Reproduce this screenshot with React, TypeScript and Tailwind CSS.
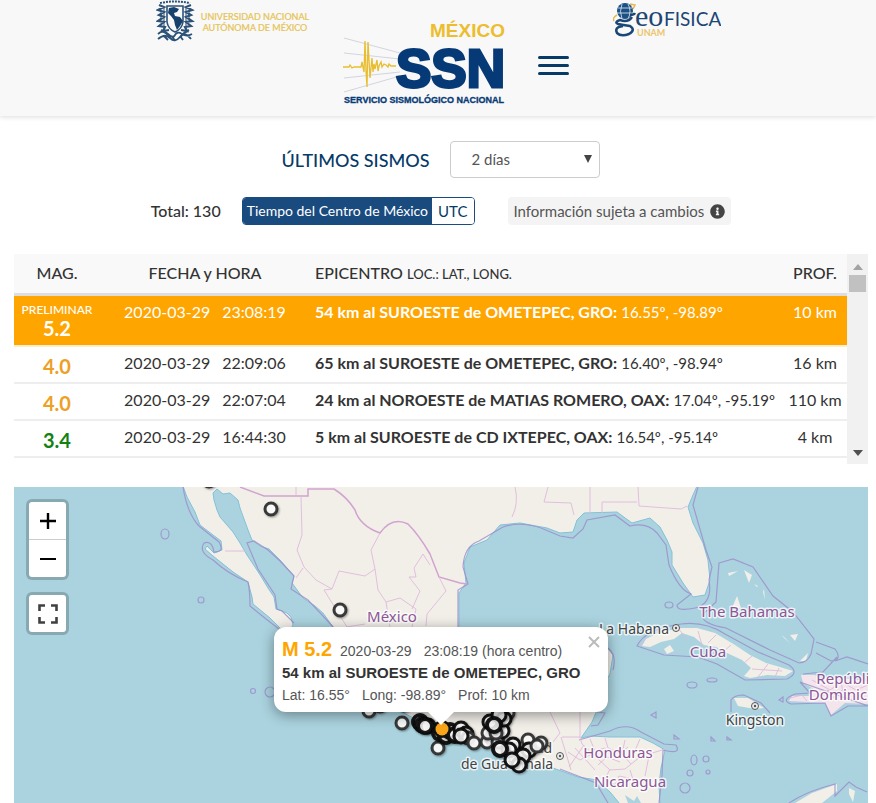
import React, { useState } from "react";
import { FaInfoCircle } from "react-icons/fa";

const quakes = [
  { mag: "5.2", date: "2020-03-29", time: "23:08:19", place: "54 km al SUROESTE de OMETEPEC, GRO:", coords: "16.55º, -98.89º", depth: "10 km", preliminary: true },
  { mag: "4.0", date: "2020-03-29", time: "22:09:06", place: "65 km al SUROESTE de OMETEPEC, GRO:", coords: "16.40º, -98.94º", depth: "16 km" },
  { mag: "4.0", date: "2020-03-29", time: "22:07:04", place: "24 km al NOROESTE de MATIAS ROMERO, OAX:", coords: "17.04º, -95.19º", depth: "110 km" },
  { mag: "3.4", date: "2020-03-29", time: "16:44:30", place: "5 km al SUROESTE de CD IXTEPEC, OAX:", coords: "16.54º, -95.14º", depth: "4 km" },
];

// [x, y, how many reports are stacked there]
const markers = [
  [209, 481, 1], [271, 509, 1], [340, 610, 1], [369, 711, 1], [380, 706, 1], [404, 705, 1], [402, 723, 1],
  [420, 722, 3], [422, 725, 2], [428, 726, 2], [425, 726, 3], [438, 748, 1], [440, 733, 3], [446, 736, 3], [450, 731, 3],
  [455, 735, 3], [461, 729, 2], [466, 734, 2], [468, 738, 1], [461, 736, 2], [474, 743, 1], [492, 738, 2], [487, 742, 1],
  [498, 742, 1], [488, 733, 1], [490, 722, 2], [502, 731, 2], [496, 733, 1], [508, 713, 1], [504, 719, 2], [499, 715, 2],
  [494, 725, 3], [513, 745, 2], [509, 750, 2], [500, 749, 4], [528, 740, 1], [541, 743, 1], [529, 750, 2], [537, 746, 1],
  [523, 756, 2], [519, 765, 2], [512, 760, 2],
];

const countries = [
  { name: "México", x: 392, y: 622 },
  { name: "The Bahamas", x: 747, y: 617 },
  { name: "Cuba", x: 708, y: 657 },
  { name: "Honduras", x: 618, y: 758 },
  { name: "Nicaragua", x: 630, y: 787 },
  { name: "Repúbli", x: 843, y: 684 },
  { name: "Dominic", x: 838, y: 700 },
];

const cities = [
  { name: "La Habana", x: 634, y: 634 },
  { name: "Kingston", x: 755, y: 725 },
  { name: "Ciudad", x: 529, y: 753 },
  { name: "de Guatemala", x: 507, y: 769 },
];

const UnamLogo = () => (
  <svg viewBox="0 0 156 42" className="h-[42px] w-[156px]" role="img" aria-label="UNAM">
    <g fill="none" stroke="#2d5277">
      <path d="M4 3Q19 0 34 3" strokeWidth="2" strokeDasharray="2 1" />
      <path d="M11 6h16v16q-1 7-8 10q-7-3-8-10z" strokeWidth="1.6" />
      <path d="M3 5l5 2-6 3 6 2-5 3 5 2-6 4 6 1-5 4 6 1-2 4 6-1M35 5l-5 2 6 3-6 2 5 3-5 2 6 4-6 1 5 4-6 1 2 4-6-1" strokeWidth="2.2" />
      <path d="M8 8v20M30 8v20M5 11v8M33 11v8" strokeWidth="1" />
      <path d="M2 34q5-5 10 0t7 1 7-1 10 0M2 39q7-6 12-1t10-1 11 2M8 36l4 4M16 36l3 5M24 36l3 4" strokeWidth="1.8" />
      <path d="M5 30q6 3 9 7M33 30q-6 3-9 7" strokeWidth="2" />
    </g>
    <path d="M13 8l5-1 5 2-2 3-3 1 1 3 5 1 3 4-3 5-3 4-2-5-1-5-3-4-3-3z" fill="#17406c" />
    <g fill="#e6c352" fontFamily="Lato, sans-serif" fontSize="9" textAnchor="middle" stroke="#e6c352" strokeWidth=".2">
      <text x="99" y="20">UNIVERSIDAD NACIONAL</text>
      <text x="99" y="31">AUTÓNOMA DE MÉXICO</text>
    </g>
  </svg>
);

const SsnLogo = () => (
  <svg viewBox="0 0 164 86" className="mt-5 h-[86px] w-[164px]" role="img" aria-label="SSN">
    <g stroke="#c9ccd8" strokeWidth=".8">
      <path d="M1 18L57 33M1 33L57 39M1 58L57 52M1 72L57 56" />
    </g>
    <path
      d="M0 47h6l1-2 2 3 2-1h7l1-5 2 10 1-31 1 30 1 16 1-45 1 18 1 18 2-20 1 14 1-8 1 5 2-9 1 11 1-5 2-4 1 5 2-3 2 1 2 2 1-3 2 2h5"
      fill="none"
      stroke="#e9bd2f"
      strokeWidth="1.3"
    />
    <g fontFamily="'Liberation Sans', Arial, sans-serif" fontWeight="bold">
      <text x="162" y="17" textAnchor="end" fontSize="19" fill="#ecbd2d">MÉXICO</text>
      <text x="162" y="67" textAnchor="end" fontSize="53" fill="#063a77" stroke="#063a77" strokeWidth="3">SSN</text>
      <text x="81" y="83" textAnchor="middle" fontSize="9" fill="#063a77" stroke="#063a77" strokeWidth=".3">SERVICIO SISMOLÓGICO NACIONAL</text>
    </g>
  </svg>
);

const GeoLogo = () => (
  <svg viewBox="0 0 108 38" className="mt-px h-[38px] w-[108px]" role="img" aria-label="Geofísica UNAM">
    <path d="M1 20q-2-3 3-6M17 3l5 1-2 4" fill="none" stroke="#eab54c" strokeWidth="1.5" />
    <circle cx="12" cy="10" r="8" fill="#1c5084" />
    <path d="M5 7h14M4 12h16M9 3q-3 7 0 15M15 3q4 7 0 15" stroke="#e5edf4" fill="none" strokeWidth=".8" />
    <path d="M19 16q-4 6-12 3q-6 2-2 4q5 1 12 2q6 4-1 8q-8 3-12-1q-3-6 6-7M17 14q4 0 5-2" fill="none" stroke="#1c4675" strokeWidth="2.5" />
    <g fill="#1c4675">
      <text x="22" y="25" fontSize="30" fontFamily="'Liberation Serif', serif">eo</text>
      <text x="51" y="25" fontSize="19" fontFamily="Lato, sans-serif">FISICA</text>
      <text x="24" y="35" fontSize="9" fontFamily="Lato, sans-serif" fill="#ecc56d" fontWeight="bold">UNAM</text>
    </g>
  </svg>
);

const QuakeMap = () => (
  <svg viewBox="14 487 854 316" preserveAspectRatio="xMidYMid slice" className="absolute inset-0 h-full w-full" role="img" aria-label="Mapa de sismos">
    <defs>
      <filter id="shade" x="-50%" y="-50%" width="200%" height="200%">
        <feDropShadow dx="1" dy="1" stdDeviation="1" floodOpacity=".4" />
      </filter>
    </defs>
    <rect x="14" y="487" width="854" height="316" fill="#aad3df" />
    {/* Mainland */}
    <path
      d="M183 486L187 497 195 512 200 525 213 535 221 541 222 550 214 553 207 546 205 549 213 556 233 572 248 582 252 597 253 604 270 618 280 628 287 636 293 625 291 617 287 613 282 611 276 609 274 597 268 588 262 578 255 567 247 555 240 543 233 532 220 517 217 510 214 500 213 493 217 489 223 494 230 493 238 500 240 508 248 530 252 540 260 546 269 549 280 560 294 576 292 583 303 598 315 606 323 613 333 627 345 650 353 680 375 707 400 711 415 719 430 729 445 740 460 743 474 744 487 747 500 757 520 765 553 768 578 777 597 780 610 792 620 804H660L659 785 661 768 665 750 653 743 640 737 610 737 590 736 581 738 592 722 597 710 601 690 610 674 613 655 606 646 570 648 545 662 535 692 515 702 490 695 470 670 459 627 459 593 466 583 464 563 470 547 487 540 500 525 520 523 547 528 560 533 573 532 577 520 584 513 617 512 632 523 650 518 660 527 667 540 672 552 672 565 683 583 693 597 705 595 710 580 708 560 703 543 693 523 688 507 693 495 697 486Z"
      fill="#f2efe9"
      stroke="#83c1d8"
      strokeWidth="1"
    />
    <g fill="#f2efe9">
      {/* Cuba, Jamaica and Hispaniola */}
      <path d="M642 646L646 639 660 632 682 628 697 628 715 633 735 645 750 655 766 663 780 667 793 671 785 676 767 675 750 678 744 676 751 668 742 660 727 653 716 647 704 645 694 637 682 633 674 639 661 642 650 647ZM664 649L670 645 674 651 667 654Z" />
      <path d="M734 698L748 698 764 708 755 709 738 706Z" />
      <path d="M801 675L815 675 820 678 840 678 868 681V704L845 703 831 715 825 703 808 702 789 701 792 696 809 696 814 689 803 683Z" fill="#f3e5eb" />
      <path d="M732 608L737 596 741 608ZM728 573l10-2-9 5zM744 570l8 5-3 8zM754 584l4 2-1 1zM764 589l1 11-2-8zM782 635l8 8-6-5zM790 635l8-1-3 7zM800 661l8-8-2 8z" />
      <path d="M795 803L812 793 837 784 837 791 822 803ZM849 788l6 3-2 11-4-8z" />
      <path d="M625 795l9 6 3-5 4 7h-13z" fill="#aad3df" />
    </g>
    {/* Maritime limits */}
    <g fill="none" stroke="#9b8cc9" strokeWidth="1.2" opacity=".8">
      <path d="M183 487Q187 513 199 526Q209 534 219 542Q225 552 214 552Q212 540 204 543Q198 552 213 560Q228 574 248 582Q250 591 250 606L266 619 279 629M294 623L282 611 277 609 275 595 258 569 250 550 247 543 254 541 268 550 280 561 294 576 291 589 308 600 323 616 334 628" />
      <path d="M458 627V590L468 584 463 567Q464 546 479 541L503 527Q520 521 541 528L560 536 573 538 583 529 587 520 615 515 630 526Q647 522 657 533L666 545 669 565Q679 590 691 594L677 605Q677 612 695 608Q713 604 709 580L712 567 706 550Q697 519 693 505L698 487" />
      <path d="M637 646Q645 629 681 624Q705 621 725 634L758 652 789 665Q800 673 787 679L745 680 717 664 698 657 664 655Z" />
      <path d="M719 563L733 559 753 567 773 596 793 612 814 639 811 654Q807 663 799 663L770 650 726 628Q702 624 702 615L716 602ZM816 642L835 649Q843 660 831 661L816 653M835 661L847 657 868 664M803 674L823 672 837 657M868 706H848L831 716 825 703 791 704Q780 700 795 694L810 693 800 682Z" />
      <path d="M731 712V700Q734 695 744 695L761 703 770 713M579 740L610 731Q627 722 641 732L664 744 676 745Q682 755 663 750L662 776 659 803M560 769L596 783 608 803M608 648Q617 655 613 670M597 712L605 713 598 725 591 726" />
      <path d="M789 803Q807 791 835 784V796L849 782 856 787 867 792" />
      <ellipse cx="165" cy="534" rx="4" ry="5" /><circle cx="201" cy="600" r="3" /><circle cx="253" cy="691" r="2.5" />
      <circle cx="270" cy="692" r="5" /><ellipse cx="669" cy="605" rx="4" ry="3" /><ellipse cx="692" cy="685" rx="5" ry="3" />
      <ellipse cx="712" cy="680" rx="5" ry="2" /><ellipse cx="694" cy="760" rx="3" ry="5" /><circle cx="706" cy="759" r="3" />
      <circle cx="690" cy="773" r="3" /><circle cx="708" cy="772" r="2" /><ellipse cx="685" cy="788" rx="5" ry="5" />
      <path d="M651 715l5-3v6zM711 737l4 4h-4zM727 737l4 3h-4zM674 735l5 4h-5zM779 700l4-3v5z" />
    </g>
    {/* Borders between countries and states */}
    <path d="M240 487L264 496H308V489H334Q347 497 355 510Q360 526 380 533Q392 516 408 524Q419 535 430 554L439 577 460 583 467 584" fill="none" stroke="#d1a3d0" strokeWidth="1.5" />
    <g fill="none" stroke="#dfb9dd" strokeWidth=".9">
      <path d="M296 487V495M225 551H247M301 496L302 535 297 550 304 567 316 580 332 589 339 571 365 576 375 569 371 550 380 533M332 589L324 590 347 627M375 569L378 590 386 602 400 598 416 609 412 627M423 554L414 568 416 577 409 577 420 591 412 609M423 554L430 565M439 577L446 591 427 614 426 626M303 568L296 578M515 487Q519 503 512 517M548 487L544 502 571 503 574 515M590 487V515M602 514V502H637M638 487L639 506 681 509 687 506M346 627L365 624M386 602L390 627" />
      <path d="M640 646l6-8M677 627l10 12M698 631l4 14M716 635l-8 8M731 645l-8 7M752 656l-8 7M768 664l-10 13M752 669l30 2M779 668l-4 9" />
      <path d="M580 712V737M550 712L560 733 553 742M562 737H580L582 744 610 770 625 769 640 757 665 749M561 737L571 770M575 748l20 22M584 745l-15 22M590 739l5 12 10-3 8 9M605 738l3 10 12 5 8-6M625 740l-3 14 9 10M640 739l-6 14M598 765l9-8 13 5M610 769l-5 10 10 6 4-9 14 3M630 770l5 16M650 751l-5 25M568 752l12 8 10-5" />
      <path d="M812 680l18 10 12-8 14 8 12-5M820 699l8-9 6 8 9-9M790 698l12-3 5 6M840 679l5 20" />
    </g>
    {/* Place names */}
    <g fontFamily="'Noto Sans', sans-serif" textAnchor="middle" stroke="#fff" strokeOpacity=".75" strokeWidth="3" strokeLinejoin="round" className="[paint-order:stroke]">
      <g fill="#8d5795" fontSize="15">
        {countries.map((c) => (
          <text key={c.name} x={c.x} y={c.y}>{c.name}</text>
        ))}
      </g>
      <g fill="#444" fontSize="14">
        {cities.map((c) => (
          <text key={c.name} x={c.x} y={c.y}>{c.name}</text>
        ))}
      </g>
    </g>
    {[[676, 628], [755, 706], [560, 756]].map(([x, y]) => (
      <g key={x}>
        <circle cx={x} cy={y} r="3.5" fill="#eee" stroke="#555" />
        <circle cx={x} cy={y} r="1.2" fill="#555" />
      </g>
    ))}
    {/* Epicentres */}
    {markers.map(([x, y, n], i) => (
      <circle key={i} cx={x} cy={y} r={n > 1 ? 7 : 6} fill="#fff" fillOpacity={n > 1 ? 0.8 : 0.88} stroke={n > 1 ? "#080808" : "#303030"} strokeOpacity=".95" strokeWidth={n > 2 ? 4 : 3} filter="url(#shade)" />
    ))}
    <circle cx="442" cy="729" r="7.5" fill="#ffa500" stroke="#111" strokeWidth="3" />
    <circle cx="442" cy="729" r="6.5" fill="#f9a51a" />
  </svg>
);

const App = () => {
  const [period, setPeriod] = useState("2");
  const [popupOpen, setPopupOpen] = useState(true);

  return (
    <div className="bg-white font-[Lato,sans-serif] text-[#333]">
      <header className="flex h-[116px] items-start justify-center bg-[#f8f8f8] shadow-[0_1px_5px_rgba(0,0,0,0.14)]">
        <UnamLogo />
        <div className="w-[31px]" />
        <SsnLogo />
        <button aria-label="Menú" className="mr-8 ml-[31px] mt-14 flex flex-col gap-[5px]">
          <span className="h-[3px] w-[31px] rounded-full bg-[#063a67]" />
          <span className="h-[3px] w-[31px] rounded-full bg-[#063a67]" />
          <span className="h-[3px] w-[31px] rounded-full bg-[#063a67]" />
        </button>
        <div className="w-3" />
        <GeoLogo />
      </header>

      <main className="pl-[14px] pr-2">
        {/* Filters */}
        <div className="flex items-center justify-center gap-[21px] pt-[25px]">
          <label htmlFor="period" className="text-lg font-medium text-[#063a67]">ÚLTIMOS SISMOS</label>
          <div className="relative">
            <select
              id="period"
              value={period}
              onChange={(e) => setPeriod(e.target.value)}
              className="h-[37px] w-[150px] appearance-none rounded border border-[#ccc] bg-white pl-5 text-[15px] text-[#555]"
            >
              <option value="2">2 días</option>
              <option value="7">7 días</option>
              <option value="15">15 días</option>
            </select>
            <svg viewBox="0 0 8 8" className="pointer-events-none absolute right-2 top-[14px] h-2 w-2" fill="#444">
              <path d="M0 0h8L4 8z" />
            </svg>
          </div>
        </div>

        <div className="flex items-center justify-center pt-[19px] text-base">
          <span className="font-medium">Total: 130</span>
          <div className="ml-[21px] flex h-7 overflow-hidden rounded border border-[#1a4b7f]">
            <button className="bg-[#1a4b7f] px-1 text-sm text-white">Tiempo del Centro de México</button>
            <button className="bg-white px-1.5 text-[15px] text-[#063a67]">UTC</button>
          </div>
          <span className="ml-[33px] flex h-7 items-center gap-1.5 rounded-sm bg-[#f4f4f4] px-1.5 text-[15px] text-[#555]">
            Información sujeta a cambios
            <FaInfoCircle className="h-[15px] w-[15px] text-[#444]" />
          </span>
        </div>

        {/* Latest quakes */}
        <div className="mt-[29px] flex h-[210px] overflow-hidden">
          <div className="min-w-0 flex-1 overflow-hidden">
            <table className="w-full table-fixed border-collapse text-base leading-5">
              <colgroup>
                <col className="w-[86px]" />
                <col className="w-[210px]" />
                <col />
                <col className="w-[64px]" />
              </colgroup>
              <thead>
                <tr className="h-[40px] border-b-[3px] border-[#ddd] bg-[#f9f9f9]">
                  <th className="font-medium">MAG.</th>
                  <th className="font-medium">FECHA y HORA</th>
                  <th className="pl-[5px] text-left font-medium">EPICENTRO <span className="text-[13px]">LOC.: LAT., LONG.</span></th>
                  <th className="whitespace-nowrap font-medium">PROF.</th>
                </tr>
              </thead>
              <tbody>
                {quakes.map((q) => (
                  <tr
                    key={q.time}
                    className={q.preliminary ? "h-[52px] border-b-2 border-[#fdeecb] bg-[#ffa500] align-top text-white" : "h-[37px] border-b-2 border-[#eee] align-top"}
                  >
                    <td className="text-center">
                      {q.preliminary && <div className="pt-1.5 text-xs leading-4 font-medium">PRELIMINAR</div>}
                      <div className={q.preliminary ? "text-xl leading-5 font-bold" : q.mag === "3.4" ? "pt-[7px] text-xl leading-6 font-bold text-[#128212]" : "pt-[7px] text-xl leading-6 font-bold text-[#eda025]"}>
                        {q.mag}
                      </div>
                    </td>
                    <td className="pt-1.5 text-center">
                      {q.date}<span className="ml-3">{q.time}</span>
                    </td>
                    <td className="pt-1.5 pl-[5px] whitespace-nowrap"><b>{q.place}</b> <span className="text-[15px]">{q.coords}</span></td>
                    <td className="pt-1.5 text-center whitespace-nowrap">{q.depth}</td>
                  </tr>
                ))}
              </tbody>
            </table>
          </div>
          <div className="flex w-[21px] flex-col items-center bg-[#f1f1f1] py-2" aria-hidden="true">
            <svg viewBox="0 0 10 6" className="mt-0.5 h-1.5 w-2.5" fill="#a3a3a3"><path d="M0 6L5 0l5 6z" /></svg>
            <div className="mt-[5px] h-[17px] w-[17px] bg-[#c1c1c1]" />
            <svg viewBox="0 0 10 6" className="mt-auto h-1.5 w-2.5" fill="#505050"><path d="M0 0l5 6 5-6z" /></svg>
          </div>
        </div>

        {/* Map */}
        <div className="relative mt-[23px] h-[316px] overflow-hidden bg-[#aad3df] font-['Liberation_Sans',Arial,sans-serif]">
          <QuakeMap />
          <div className="absolute top-3 left-3 flex flex-col gap-3">
            <div className="flex flex-col rounded-md border-[3px] border-black/20 bg-white bg-clip-padding">
              <button aria-label="Acercar" className="flex h-[38px] w-[37px] items-center justify-center border-b border-[#ccc]">
                <svg viewBox="0 0 16 16" className="h-4 w-4" stroke="#000" strokeWidth="2.4"><path d="M0 8h16M8 0v16" /></svg>
              </button>
              <button aria-label="Alejar" className="flex h-[37px] w-[37px] items-center justify-center">
                <svg viewBox="0 0 16 16" className="h-4 w-4" stroke="#000" strokeWidth="2"><path d="M0 8h16" /></svg>
              </button>
            </div>
            <button aria-label="Pantalla completa" className="flex h-[43px] w-[43px] items-center justify-center rounded-md border-[3px] border-black/20 bg-white bg-clip-padding">
              <svg viewBox="0 0 20 20" className="h-5 w-5" fill="none" stroke="#404040" strokeWidth="2.6">
                <path d="M1.5 7V1.5H7M13 1.5h5.5V7M18.5 13v5.5H13M7 18.500H1.500V13" />
              </svg>
            </button>
          </div>

          {popupOpen && (
            <div className="absolute top-[140px] left-1/2 w-[334px] -translate-x-1/2">
              <div className="relative z-10 h-[85px] rounded-xl bg-white px-2 pt-[11px] text-sm leading-[22px] text-[#555] shadow-[0_3px_14px_rgba(0,0,0,0.4)]">
                <p className="whitespace-nowrap">
                  <b className="mr-2 text-xl leading-[22px] text-[#ffa500]">M 5.2</b>2020-03-29<span className="ml-3">23:08:19 (hora centro)</span>
                </p>
                <p className="text-[15px] leading-[22px] font-bold whitespace-nowrap text-[#333]">54 km al SUROESTE de OMETEPEC, GRO</p>
                <p className="whitespace-nowrap">Lat: 16.55°<span className="ml-3">Long: -98.89°</span><span className="ml-3">Prof: 10 km</span></p>
                <button aria-label="Cerrar" onClick={() => setPopupOpen(false)} className="absolute top-[9px] right-2">
                  <svg viewBox="0 0 12 12" className="h-3 w-3" stroke="#bbb" strokeWidth="2"><path d="M1 1l10 10M11 1L1 11" /></svg>
                </button>
              </div>
              <svg viewBox="0 0 28 14" className="relative z-20 mx-auto -mt-px h-[14px] w-7" fill="#fff"><path d="M0 0h28L14 14z" /></svg>
            </div>
          )}
        </div>
      </main>
    </div>
  );
};

export default App;
